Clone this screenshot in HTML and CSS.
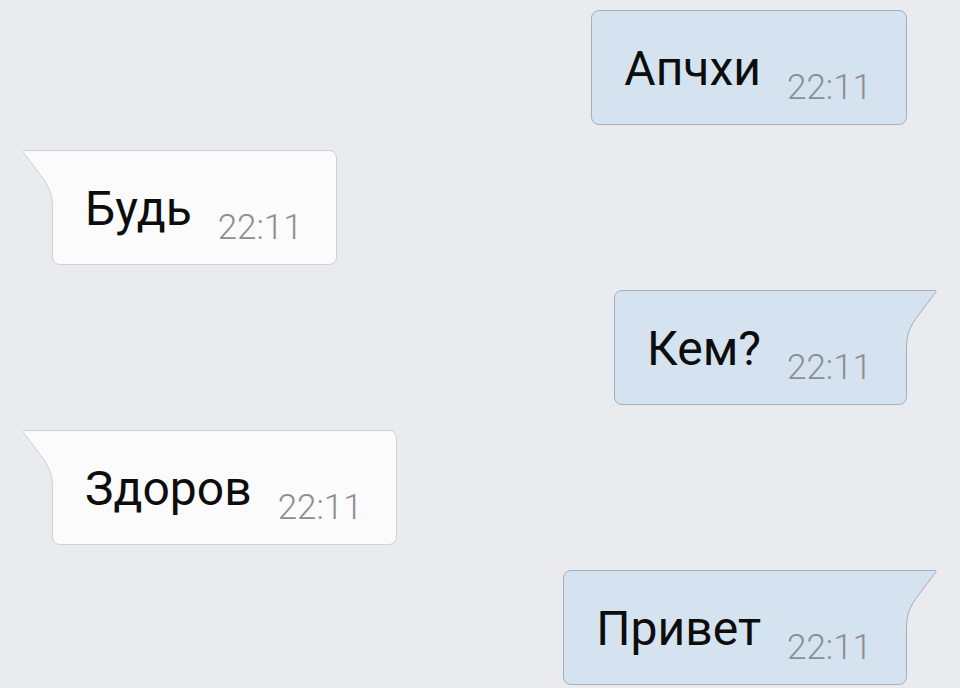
FILE: index.html
```html
<!DOCTYPE html>
<html lang="ru">

<head>
    <meta charset="utf-8">
    <link rel="stylesheet" href="styles.css">
</head>

<body>
    <div class="chat">
        <div class="msg out">
            <span class="text">Апчхи</span>
            <span class="time">22:11</span>
        </div>
        <div class="msg in tail">
            <svg class="tail-shape" width="33" height="56" viewBox="0 0 33 56">
                <path class="tail-fill" d="M33,0 L1,0 Q0,0.5 0.8,1.5 L20,27 Q30.5,40 30.5,56 L33,56 Z" />
                <path class="tail-line" d="M33,0.5 L1.5,0.5 Q0.3,0.8 1,1.8 L20,27 Q30.5,40 30.5,56" />
            </svg>
            <span class="text">Будь</span>
            <span class="time">22:11</span>
        </div>
        <div class="msg out tail">
            <svg class="tail-shape" width="33" height="56" viewBox="0 0 33 56">
                <path class="tail-fill" d="M33,0 L1,0 Q0,0.5 0.8,1.5 L20,27 Q30.5,40 30.5,56 L33,56 Z" />
                <path class="tail-line" d="M33,0.5 L1.5,0.5 Q0.3,0.8 1,1.8 L20,27 Q30.5,40 30.5,56" />
            </svg>
            <span class="text">Кем?</span>
            <span class="time">22:11</span>
        </div>
        <div class="msg in tail">
            <svg class="tail-shape" width="33" height="56" viewBox="0 0 33 56">
                <path class="tail-fill" d="M33,0 L1,0 Q0,0.5 0.8,1.5 L20,27 Q30.5,40 30.5,56 L33,56 Z" />
                <path class="tail-line" d="M33,0.5 L1.5,0.5 Q0.3,0.8 1,1.8 L20,27 Q30.5,40 30.5,56" />
            </svg>
            <span class="text">Здоров</span>
            <span class="time">22:11</span>
        </div>
        <div class="msg out tail">
            <svg class="tail-shape" width="33" height="56" viewBox="0 0 33 56">
                <path class="tail-fill" d="M33,0 L1,0 Q0,0.5 0.8,1.5 L20,27 Q30.5,40 30.5,56 L33,56 Z" />
                <path class="tail-line" d="M33,0.5 L1.5,0.5 Q0.3,0.8 1,1.8 L20,27 Q30.5,40 30.5,56" />
            </svg>
            <span class="text">Привет</span>
            <span class="time">22:11</span>
        </div>
    </div>
</body>

</html>
```
FILE: styles.css
```css
body {
    font-family: Roboto, "Liberation Sans", Arial, sans-serif;
    background-color: #e9ebee;
    margin: 0;
    padding: 0;
}

.chat {
    display: flex;
    flex-direction: column;
    gap: 25px;
    padding: 10px 53px 0 52px;
    height: 678px;
    overflow: hidden;
}

.msg {
    position: relative;
    display: flex;
    align-items: flex-start;
    gap: 26px;
    box-sizing: border-box;
    height: 115px;
    padding: 34px 34px 0 32px;
    border: 1px solid;
    border-radius: 8px;
    flex-shrink: 0;
}

.msg.in {
    align-self: flex-start;
    background-color: #fbfbfb;
    border-color: #cdd0d4;
    --bubble-bg: #fbfbfb;
    --bubble-line: #cdd0d4;
}

.msg.out {
    align-self: flex-end;
    background-color: #d5e3f0;
    border-color: #a3afbb;
    --bubble-bg: #d5e3f0;
    --bubble-line: #a3afbb;
}

.msg.in {
    padding-right: 33px;
}

.text {
    font-size: 48px;
    line-height: 48px;
    color: #0d0d0d;
}

.time {
    font-size: 35px;
    line-height: 35px;
    font-weight: 300;
    color: #8b8e92;
    margin-top: 25px;
}

.in.tail {
    border-top-left-radius: 0;
}

.out.tail {
    border-top-right-radius: 0;
}

.tail-shape {
    position: absolute;
    top: -1px;
}

.in .tail-shape {
    left: -31px;
}

.out .tail-shape {
    right: -31px;
    transform: scaleX(-1);
}

.tail-fill {
    fill: var(--bubble-bg);
}

.tail-line {
    fill: none;
    stroke: var(--bubble-line);
    stroke-width: 1;
}
```
